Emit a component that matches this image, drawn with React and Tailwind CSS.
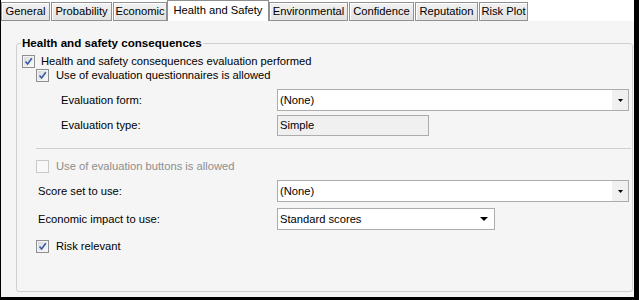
import React from "react";

const TABS = [
  { name: "General", w: "w-[49px]", gap: true },
  { name: "Probability", w: "w-[61px]", gap: true },
  { name: "Economic", w: "w-[54px]" },
  { name: "Health and Safety", w: "w-[102px]", active: true },
  { name: "Environmental", w: "w-[79px]", gap: true },
  { name: "Confidence", w: "w-[65px]", gap: true },
  { name: "Reputation", w: "w-[63px]", gap: true },
  { name: "Risk Plot", w: "w-[49px]", gap: true },
];

function Check({ checked, disabled }) {
  return (
    <span
      className={`w-[13px] h-[13px] shrink-0 border flex items-center justify-center ${
        disabled
          ? "border-[#c9c9c9] bg-[#f8f8f8]"
          : "border-[#8e8f8f] bg-gradient-to-br from-[#d4d7dc] to-[#fbfbfb] shadow-[inset_0_0_0_1px_#f4f4f4]"
      }`}
    >
      {checked && (
        <svg width="9" height="9" viewBox="0 0 9 9">
          <path d="M1.5 4.5 L3.6 7 L7.8 1.2" fill="none" stroke="#3a5ba3" strokeWidth="1.6" />
        </svg>
      )}
    </span>
  );
}

function Combo({ value, w = "flex-1", big }) {
  return (
    <div className={`${w} h-[22px] border border-[#acacac] bg-white flex items-center`}>
      <span className="flex-1 pl-[2px]">{value}</span>
      {big ? (
        <span className="w-[20px] h-full flex items-center justify-center">
          <svg width="8" height="4" viewBox="0 0 8 4">
            <path d="M0 0 H8 L4 4 Z" fill="#000" />
          </svg>
        </span>
      ) : (
        <span className="w-[16px] h-full bg-[#f0f0f0] flex items-center justify-center">
          <svg width="5" height="3" viewBox="0 0 5 3">
            <path d="M0 0 H5 L2.5 3 Z" fill="#000" />
          </svg>
        </span>
      )}
    </div>
  );
}

export default function App() {
  return (
    <div
      className="w-[639px] h-[300px] bg-black pl-[1px] pr-[5px] pb-[3px] text-[11.2px] text-black"
      style={{ fontFamily: '"Liberation Sans", Arial, sans-serif' }}
    >
      <div className="h-full flex flex-col bg-[#f5f5f5]">
        {/* tab strip */}
        <div className="h-[21px] bg-white flex items-end">
          {TABS.map((t) =>
            t.active ? (
              <div
                key={t.name}
                className={`${t.w} h-[21px] z-10 bg-white border border-b-0 border-[#8f8f8f] flex items-center justify-center pb-[2px]`}
              >
                {t.name}
              </div>
            ) : (
              <div
                key={t.name}
                className={`${t.w} h-[19px] ${t.gap ? "mr-[1px]" : ""} bg-gradient-to-b from-[#f2f2f2] to-[#e2e2e2] border border-[#919191] shadow-[inset_1px_1px_0_#ffffff] flex items-center justify-center`}
              >
                {t.name}
              </div>
            )
          )}
        </div>

        {/* group box */}
        <div className="relative mt-[22px] ml-[15px] mr-[1px] h-[249px] border border-[#d0d0d0] rounded-[3px] pl-[5px] pr-[3px]">
          <span className="absolute -top-[8px] left-[4px] px-[1px] bg-[#f5f5f5] font-bold text-[11.6px] leading-[13px]">
            Health and safety consequences
          </span>

          <div className="mt-[11px] h-[13px] flex items-center gap-[6px]">
            <Check checked />
            <span>Health and safety consequences evaluation performed</span>
          </div>
          <div className="mt-[1px] ml-[14px] h-[13px] flex items-center gap-[7px]">
            <Check checked />
            <span>Use of evaluation questionnaires is allowed</span>
          </div>

          <div className="mt-[7px] flex items-center">
            <span className="ml-[39px] w-[216px]">Evaluation form:</span>
            <Combo value="(None)" />
          </div>
          <div className="mt-[4px] flex items-center">
            <span className="ml-[39px] w-[216px]">Evaluation type:</span>
            <div className="w-[152px] h-[21px] border border-[#acacac] bg-[#f0f0f0] flex items-center pl-[2px]">
              Simple
            </div>
          </div>

          <div className="mt-[12px] ml-[14px] mr-[-2px] h-px bg-[#cfcfcf]" />

          <div className="mt-[11px] ml-[14px] h-[13px] flex items-center gap-[7px] text-[#8d8d8d]">
            <Check disabled />
            <span>Use of evaluation buttons is allowed</span>
          </div>

          <div className="mt-[7px] flex items-center">
            <span className="ml-[16px] w-[239px]">Score set to use:</span>
            <Combo value="(None)" />
          </div>
          <div className="mt-[6px] flex items-center">
            <span className="ml-[16px] w-[239px]">Economic impact to use:</span>
            <Combo value="Standard scores" w="w-[218px]" big />
          </div>

          <div className="mt-[10px] ml-[14px] h-[13px] flex items-center gap-[7px]">
            <Check checked />
            <span>Risk relevant</span>
          </div>
        </div>
      </div>
    </div>
  );
}
